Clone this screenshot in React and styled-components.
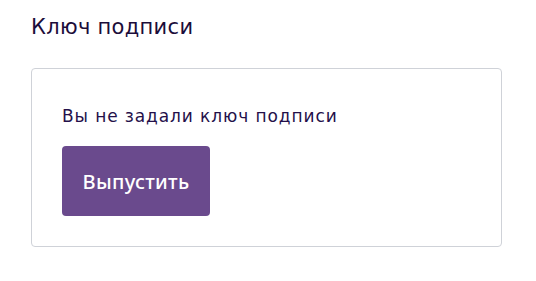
import React from "react";
import styled, { createGlobalStyle } from "styled-components";

const Global = createGlobalStyle`
  body {
    margin: 0;
    background: #ffffff;
    font-family: "DejaVu Sans", "Noto Sans", sans-serif;
  }
`;

const Page = styled.div`
  padding: 12px 34px 0 31px;
  display: flex;
  flex-direction: column;
  gap: 26px;
`;

const Title = styled.h2`
  margin: 0;
  font-size: 21px;
  font-weight: 400;
  line-height: 30px;
  color: #1c0d3a;
  letter-spacing: 0.3px;
`;

const Card = styled.div`
  border: 1px solid #cfd2d8;
  border-radius: 4px;
  padding: 34px 30px 30px;
  display: flex;
  flex-direction: column;
  align-items: flex-start;
  gap: 17px;
`;

const Message = styled.p`
  margin: 0;
  font-size: 17px;
  line-height: 26px;
  color: #24104a;
  letter-spacing: 0.9px;
`;

const Button = styled.button`
  width: 148px;
  height: 70px;
  border: none;
  border-radius: 4px;
  background: #6a4a8d;
  color: #ffffff;
  font-family: "Noto Sans", sans-serif;
  font-weight: 500;
  font-size: 20px;
  letter-spacing: 0.3px;
  cursor: pointer;
`;

export default function App() {
  return (
    <>
      <Global />
      <Page>
        <Title>Ключ подписи</Title>
        <Card>
          <Message>Вы не задали ключ подписи</Message>
          <Button>Выпустить</Button>
        </Card>
      </Page>
    </>
  );
}
